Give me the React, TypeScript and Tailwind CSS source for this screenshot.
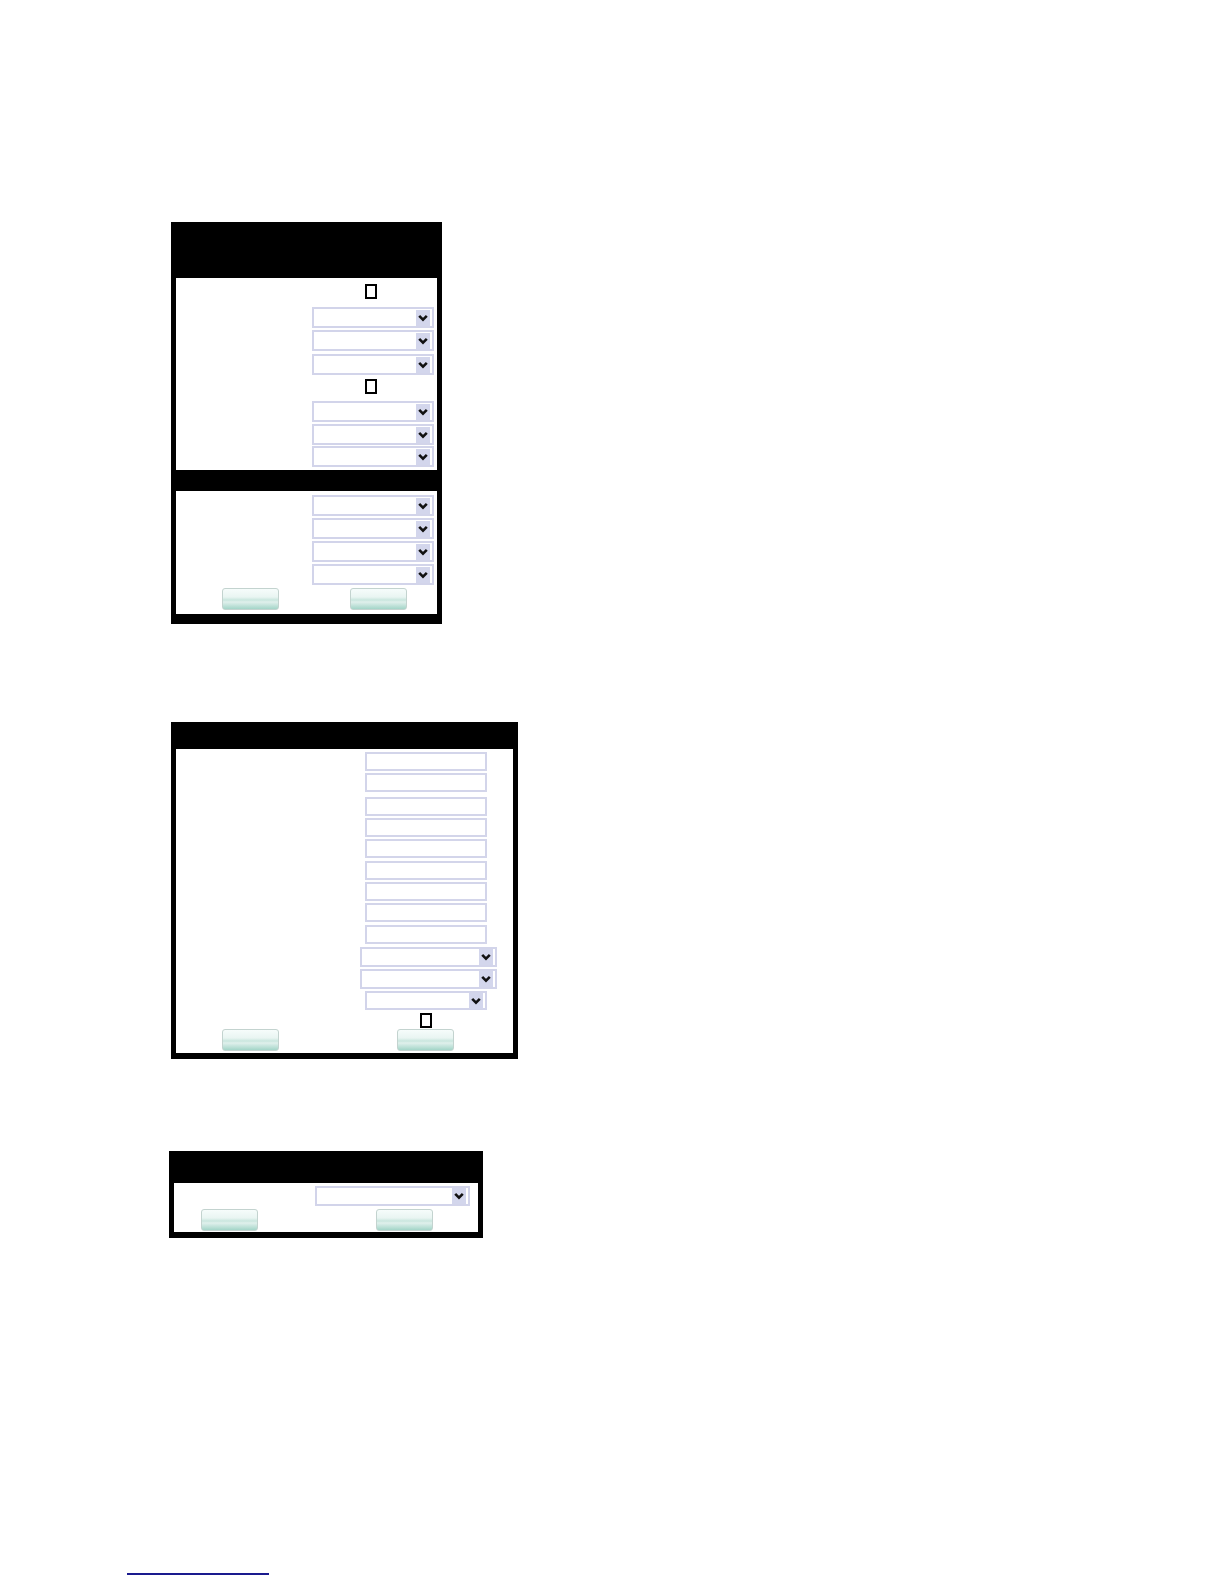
import type { ReactNode } from 'react';

function Chevron () {
  return (
    <span className="flex h-[16px] w-[14px] items-center justify-center bg-[#d3d6ec]">
      <svg width="10" height="8" viewBox="0 0 10 8">
        <path d="M1.2 1.8 L5 5.6 L8.8 1.8" fill="none" stroke="#111" strokeWidth="2.6" />
      </svg>
    </span>
  );
}

function Select ({ className = '' }: { className?: string }) {
  return (
    <div className={`flex items-center justify-end border-2 border-[#d2d4ea] bg-white pr-[2px] ${className}`}>
      <Chevron />
    </div>
  );
}

function TextInput ({ className = '' }: { className?: string }) {
  return <div className={`border-2 border-[#d3d5ea] bg-white ${className}`} />;
}

function Check ({ className = '' }: { className?: string }) {
  return <div className={`h-[15px] w-[12px] border-2 border-black bg-white ${className}`} />;
}

function Button ({ className = '' }: { className?: string }) {
  return (
    <div
      className={`h-[22px] w-[57px] rounded-[3px] border border-[#c3d3cf] bg-[linear-gradient(to_bottom,#f6fcfb_0%,#e9f5f2_40%,#c9e6de_55%,#e0f0ec_65%,#a3d5c8_100%)] ${className}`}
    />
  );
}

function Panel ({ header, children, className = '' }: { header: string; children: ReactNode; className?: string }) {
  return (
    <div className={`flex flex-col bg-black px-[5px] ${className}`}>
      <div className={header} />
      {children}
    </div>
  );
}

export default function App () {
  return (
    <div className="flex min-h-[1584px] flex-col bg-white pt-[222px] font-['Liberation_Sans',sans-serif]">
      {/* panel 1 */}
      <Panel header="h-[56px]" className="ml-[171px] w-[271px] pb-[10px]">
        <div className="flex flex-col bg-white pb-[3px] pl-[136px] pr-[3px] pt-[6px]">
          <Check className="ml-[53px]" />
          <Select className="mt-[8px] h-[21px]" />
          <Select className="mt-[2px] h-[21px]" />
          <Select className="mt-[3px] h-[21px]" />
          <Check className="ml-[53px] mt-[4px]" />
          <Select className="mt-[7px] h-[21px]" />
          <Select className="mt-[2px] h-[21px]" />
          <Select className="mt-[1px] h-[21px]" />
        </div>
        <div className="h-[21px]" />
        <div className="flex flex-col bg-white pb-[4px] pt-[4px]">
          <div className="flex flex-col gap-[2px] pl-[136px] pr-[3px]">
            <Select className="h-[21px]" />
            <Select className="h-[21px]" />
            <Select className="h-[21px]" />
            <Select className="h-[21px]" />
          </div>
          <div className="mt-[3px] flex gap-[71px] pl-[46px]">
            <Button />
            <Button />
          </div>
        </div>
      </Panel>

      {/* panel 2 */}
      <Panel header="h-[27px]" className="ml-[171px] mt-[98px] w-[347px] pb-[6px]">
        <div className="flex flex-col bg-white pb-[2px] pt-[3px]">
          <div className="flex flex-col gap-[2px] pl-[189px]">
            <TextInput className="h-[19px] w-[122px]" />
            <TextInput className="h-[19px] w-[122px]" />
            <TextInput className="mt-[3px] h-[19px] w-[122px]" />
            <TextInput className="h-[19px] w-[122px]" />
            <TextInput className="h-[19px] w-[122px]" />
            <TextInput className="mt-[1px] h-[19px] w-[122px]" />
            <TextInput className="h-[19px] w-[122px]" />
            <TextInput className="h-[19px] w-[122px]" />
            <TextInput className="mt-[1px] h-[19px] w-[122px]" />
          </div>
          <Select className="ml-[184px] mt-[3px] h-[20px] w-[137px]" />
          <Select className="ml-[184px] mt-[2px] h-[20px] w-[137px]" />
          <Select className="ml-[189px] mt-[2px] h-[19px] w-[122px]" />
          <Check className="ml-[244px] mt-[3px]" />
          <div className="mt-[1px] flex gap-[118px] pl-[46px]">
            <Button />
            <Button />
          </div>
        </div>
      </Panel>

      {/* panel 3 */}
      <Panel header="h-[32px]" className="ml-[169px] mt-[92px] w-[314px] pb-[6px]">
        <div className="flex flex-col bg-white pb-[1px] pt-[3px]">
          <Select className="ml-[141px] h-[20px] w-[155px]" />
          <div className="mt-[3px] flex gap-[118px] pl-[27px]">
            <Button />
            <Button />
          </div>
        </div>
      </Panel>

      <div className="ml-[127px] mt-[335px] h-[2px] w-[142px] bg-[#1a1a8e]" />
    </div>
  );
}
